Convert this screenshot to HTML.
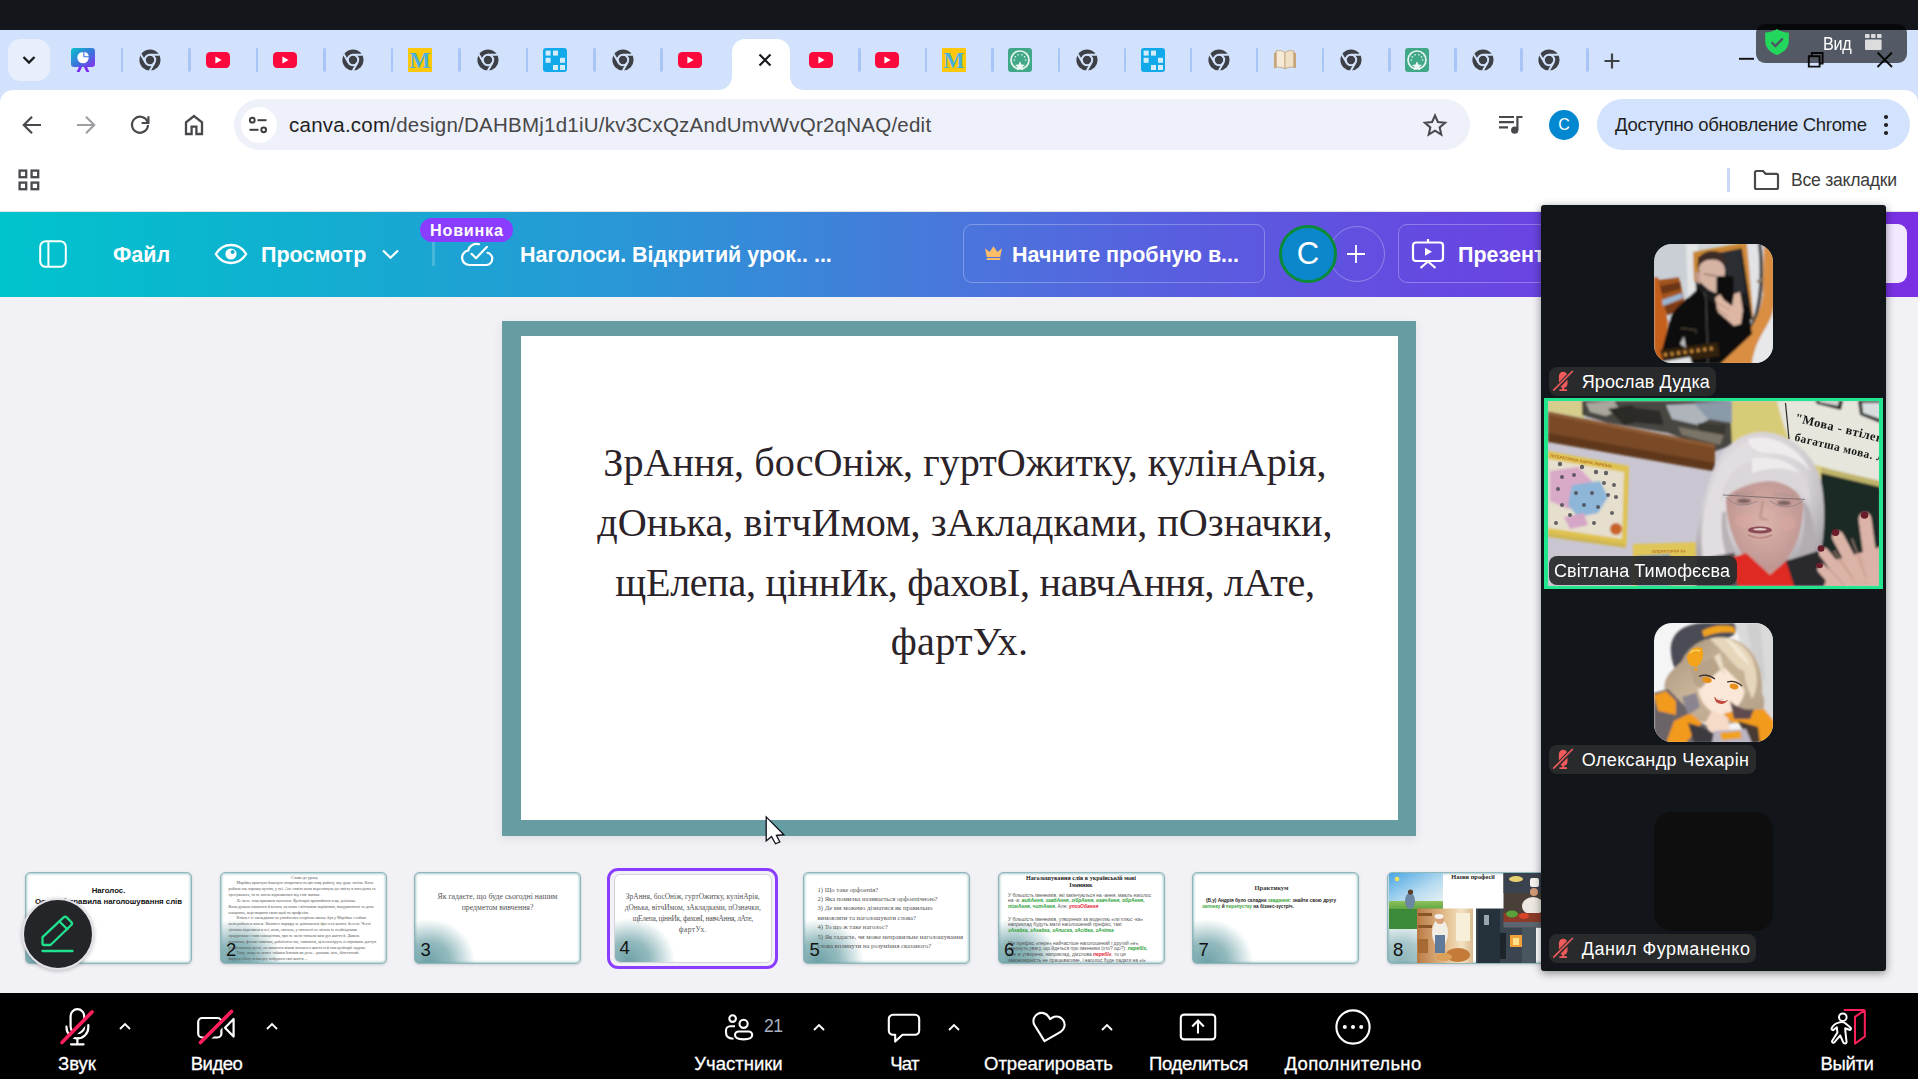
<!DOCTYPE html>
<html lang="ru">
<head>
<meta charset="utf-8">
<title>Zoom - Canva</title>
<style>
*{box-sizing:border-box;margin:0;padding:0}
html,body{width:1918px;height:1079px;overflow:hidden;background:#f2f1f5;font-family:"Liberation Sans","DejaVu Sans",sans-serif;}
#root{position:relative;width:1918px;height:1079px;overflow:hidden}
.abs{position:absolute}
/* top black bar */
#topbar{left:0;top:0;width:1918px;height:30px;background:#13161a}
/* chrome tab strip */
#tabstrip{left:0;top:30px;width:1918px;height:76px;background:#d3e2fc}
#tabdrop{left:8px;top:39px;width:42px;height:42px;border-radius:13px;background:#e8eefc}
.sep{position:absolute;top:48px;width:2.800px;height:24px;background:#a9c5f7;border-radius:1.400px}
.fav{position:absolute;top:48px;width:24px;height:24px}
#acttab{left:732px;top:39px;width:58px;height:51px;background:#fff;border-radius:13px 13px 0 0}
#acttab:before,#acttab:after{content:"";position:absolute;bottom:0;width:13px;height:13px}
#acttab:before{left:-13px;background:radial-gradient(circle at 0 0,transparent 12.5px,#fff 13px)}
#acttab:after{right:-13px;background:radial-gradient(circle at 100% 0,transparent 12.5px,#fff 13px)}
/* toolbar */
#toolbar{left:0;top:90px;width:1918px;height:67px;background:#fff;border-radius:13px 13px 0 0}
#omni{left:234px;top:99px;width:1236px;height:51px;border-radius:26px;background:#eef0fa}
#omni .site{position:absolute;left:6.500px;top:7.500px;width:36px;height:36px;border-radius:50%;background:#fff}
#url{left:289px;top:99px;height:51px;line-height:51px;font-size:20.5px;color:#1f1f1f;letter-spacing:0.24px;white-space:nowrap}
#url span{color:#474747}
#upd{left:1597px;top:99px;width:313px;height:51px;border-radius:26px;background:#d3e3fd}
#updt{left:1615px;top:99px;height:51px;line-height:51px;font-size:18.5px;color:#1f1f1f;white-space:nowrap;letter-spacing:-.3px}
#prof{left:1549px;top:110px;width:30px;height:30px;border-radius:50%;background:#0288d1;color:#fff;font-size:16px;text-align:center;line-height:30px}
/* bookmarks */
#bookmarks{left:0;top:157px;width:1918px;height:55px;background:#fff}
#allbm{left:1791px;top:166px;height:28px;line-height:28px;font-size:17.600px;color:#3c3c3c;white-space:nowrap;letter-spacing:-.25px}
/* canva header */
#chead{left:0;top:212px;width:1918px;height:85px;background:linear-gradient(90deg,#00c4cc 0%,#10b0d0 15%,#2a96d6 33%,#4a76dc 50%,#595ddf 62%,#6649e1 75%,#7a30e4 100%)}
.ct{position:absolute;color:#fff;font-weight:bold;font-size:21.5px;line-height:30px;top:239.700px;white-space:nowrap}
#stage{left:0;top:297px;width:1918px;height:696px;background:#f2f1f5}
/* slide */
#slide{left:501.800px;top:320.800px;width:914px;height:514.900px;background:#659da3;box-shadow:0 3px 9px rgba(60,60,90,.10)}
#slidein{left:520.600px;top:335.600px;width:877.800px;height:484.200px;background:#fff}
#stext{left:521px;top:433.100px;width:877px;text-align:center;font-family:"Liberation Serif","DejaVu Serif",serif;font-size:40.200px;line-height:59.700px;color:#2b2328;white-space:nowrap}
.sl{position:relative;left:5.500px}
/* thumbs */
.th{position:absolute;top:872px;width:167px;height:92px;background:#fff;border-radius:5px;border:1px solid #8fb8bd;overflow:hidden;box-shadow:0 1px 3px rgba(0,0,0,.14),inset 0 0 2.500px .500px rgba(95,154,160,.75)}
.th .blob{position:absolute;left:-32px;bottom:-40px;width:92px;height:84px;border-radius:50%;background:radial-gradient(closest-side,#6fa3a8 0%,rgba(111,163,168,.75) 45%,rgba(111,163,168,0) 100%)}
.th .n{position:absolute;left:5.500px;bottom:2.500px;font-size:18.500px;color:#111;line-height:22px}
.tt{position:absolute;left:0;width:100%;text-align:center;font-family:"Liberation Serif",serif;color:#333;white-space:nowrap}
.t2{position:absolute;left:8px;top:1.500px;width:160px;font-family:"Liberation Serif",serif;font-size:4px;line-height:5.850px;color:#555;white-space:nowrap}
.t6{position:absolute;left:9.500px;font-family:"Liberation Sans",sans-serif;font-size:4.850px;line-height:5.900px;color:#555;white-space:nowrap}
.t6 i{color:#2fa33a;font-weight:bold}.t6 b{color:#e6263a;font-style:italic}
.t7{position:absolute;left:9px;top:24.500px;font-family:"Liberation Sans",sans-serif;font-weight:bold;font-size:4.700px;line-height:6.400px;color:#222;white-space:nowrap}
.t7 i{color:#3aa53a;font-style:normal}
.mm{position:absolute;left:3.200px;top:2.800px}
/* zoom bottom */
#zbar{left:0;top:993px;width:1918px;height:86px;background:#000}
.zl{position:absolute;top:1050.600px;height:26px;line-height:26px;color:#fff;font-size:18.5px;text-align:center;white-space:nowrap;transform:translateX(-50%);-webkit-text-stroke:.300px #fff}
/* zoom panel */
#zpanel{left:1541px;top:205px;width:345px;height:766px;background:#121519;border-radius:3px;box-shadow:0 2px 8px rgba(0,0,0,.45)}
.nm{position:absolute;height:29px;line-height:31px;border-radius:8px;background:rgba(42,44,45,.94);color:#fff;font-size:18px;white-space:nowrap;padding:0 6px 0 32.700px}
.av{position:absolute;left:1654px;width:119px;height:119px;border-radius:18px;overflow:hidden}
</style>
</head>
<body>
<div id="root">
<div id="stage" class="abs"></div>
<div id="topbar" class="abs"></div>
<div id="tabstrip" class="abs"></div>
<div id="tabdrop" class="abs"></div>
<div id="acttab" class="abs"></div>
<div class="sep" style="left:120.65px"></div>
<div class="sep" style="left:188.15px"></div>
<div class="sep" style="left:255.65px"></div>
<div class="sep" style="left:323.15px"></div>
<div class="sep" style="left:390.65px"></div>
<div class="sep" style="left:458.15px"></div>
<div class="sep" style="left:525.65px"></div>
<div class="sep" style="left:593.15px"></div>
<div class="sep" style="left:660.15px"></div>
<div class="sep" style="left:858.15px"></div>
<div class="sep" style="left:924.65px"></div>
<div class="sep" style="left:991.15px"></div>
<div class="sep" style="left:1057.65px"></div>
<div class="sep" style="left:1123.65px"></div>
<div class="sep" style="left:1189.65px"></div>
<div class="sep" style="left:1255.65px"></div>
<div class="sep" style="left:1321.65px"></div>
<div class="sep" style="left:1388.15px"></div>
<div class="sep" style="left:1454.15px"></div>
<div class="sep" style="left:1520.15px"></div>
<div class="sep" style="left:1586.15px"></div>
<svg class="fav" style="left:71px" viewBox="0 0 24 24"><defs><linearGradient id="cvg" x1="0" y1="0" x2="1" y2="1"><stop offset="0" stop-color="#06c5c9"/><stop offset=".55" stop-color="#3c72dc"/><stop offset="1" stop-color="#8b2ff0"/></linearGradient></defs><rect x="0" y="0" width="24" height="19" rx="3.2" fill="url(#cvg)"/><path d="M8.4 18L5.6 24H8.6L11 19ZM15.6 18L18.4 24H15.4L13 19Z" fill="#7a2df0"/><circle cx="12" cy="9.6" r="5.7" fill="#fff"/><path d="M12.9 3.2A5.7 5.7 0 0 1 18.4 8.7H12.9Z" fill="#fff" stroke="#3a78dd" stroke-width="1.1"/></svg>
<svg class="fav" style="left:138px" viewBox="0 0 24 24"><circle cx="12" cy="12" r="10.6" fill="#3d4046"/><g stroke="#d3e2fc" stroke-width="2" fill="none" stroke-linecap="butt"><circle cx="12" cy="12" r="5.2"/><path d="M12 6.8H21.6M7.5 14.6L2.7 6.3M16.5 14.6L11.7 22.9"/></g><circle cx="12" cy="12" r="3.4" fill="#3d4046"/></svg>
<svg class="fav" style="left:205.5px" viewBox="0 0 24 24"><rect x="0" y="4" width="24" height="16" rx="4.2" fill="#fa0a3c"/><path d="M9.4 8.6L15.6 12L9.4 15.4Z" fill="#fff"/></svg>
<svg class="fav" style="left:272.5px" viewBox="0 0 24 24"><rect x="0" y="4" width="24" height="16" rx="4.2" fill="#fa0a3c"/><path d="M9.4 8.6L15.6 12L9.4 15.4Z" fill="#fff"/></svg>
<svg class="fav" style="left:340.5px" viewBox="0 0 24 24"><circle cx="12" cy="12" r="10.6" fill="#3d4046"/><g stroke="#d3e2fc" stroke-width="2" fill="none" stroke-linecap="butt"><circle cx="12" cy="12" r="5.2"/><path d="M12 6.8H21.6M7.5 14.6L2.7 6.3M16.5 14.6L11.7 22.9"/></g><circle cx="12" cy="12" r="3.4" fill="#3d4046"/></svg>
<svg class="fav" style="left:407.5px" viewBox="0 0 24 24"><rect x="0" y="0" width="24" height="24" fill="#fdc80a"/><text x="12" y="20" text-anchor="middle" font-family="Liberation Serif,serif" font-weight="bold" font-size="23" fill="#4cb0dc" textLength="21" lengthAdjust="spacingAndGlyphs">M</text></svg>
<svg class="fav" style="left:476px" viewBox="0 0 24 24"><circle cx="12" cy="12" r="10.6" fill="#3d4046"/><g stroke="#d3e2fc" stroke-width="2" fill="none" stroke-linecap="butt"><circle cx="12" cy="12" r="5.2"/><path d="M12 6.8H21.6M7.5 14.6L2.7 6.3M16.5 14.6L11.7 22.9"/></g><circle cx="12" cy="12" r="3.4" fill="#3d4046"/></svg>
<svg class="fav" style="left:543px" viewBox="0 0 24 24"><rect width="24" height="24" rx="3" fill="#12a9ea"/><g fill="#d5ecfb"><rect x="2.6" y="2.6" width="5" height="5"/><rect x="10" y="2.6" width="5" height="5"/><rect x="2.6" y="9.8" width="5" height="5"/><rect x="17" y="9.8" width="5" height="5"/><rect x="10" y="17" width="5" height="5"/><rect x="17" y="17" width="5" height="5"/></g></svg>
<svg class="fav" style="left:610.5px" viewBox="0 0 24 24"><circle cx="12" cy="12" r="10.6" fill="#3d4046"/><g stroke="#d3e2fc" stroke-width="2" fill="none" stroke-linecap="butt"><circle cx="12" cy="12" r="5.2"/><path d="M12 6.8H21.6M7.5 14.6L2.7 6.3M16.5 14.6L11.7 22.9"/></g><circle cx="12" cy="12" r="3.4" fill="#3d4046"/></svg>
<svg class="fav" style="left:677.5px" viewBox="0 0 24 24"><rect x="0" y="4" width="24" height="16" rx="4.2" fill="#fa0a3c"/><path d="M9.4 8.6L15.6 12L9.4 15.4Z" fill="#fff"/></svg>
<svg class="fav" style="left:808.5px" viewBox="0 0 24 24"><rect x="0" y="4" width="24" height="16" rx="4.2" fill="#fa0a3c"/><path d="M9.4 8.6L15.6 12L9.4 15.4Z" fill="#fff"/></svg>
<svg class="fav" style="left:875px" viewBox="0 0 24 24"><rect x="0" y="4" width="24" height="16" rx="4.2" fill="#fa0a3c"/><path d="M9.4 8.6L15.6 12L9.4 15.4Z" fill="#fff"/></svg>
<svg class="fav" style="left:941.5px" viewBox="0 0 24 24"><rect x="0" y="0" width="24" height="24" fill="#fdc80a"/><text x="12" y="20" text-anchor="middle" font-family="Liberation Serif,serif" font-weight="bold" font-size="23" fill="#4cb0dc" textLength="21" lengthAdjust="spacingAndGlyphs">M</text></svg>
<svg class="fav" style="left:1008px" viewBox="0 0 24 24"><rect width="24" height="24" rx="3" fill="#40a888"/><circle cx="12" cy="12" r="9" fill="none" stroke="#e9f5f0" stroke-width="1.700"/><g fill="#d6eee4"><circle cx="6.400" cy="12.000" r=".850"/><circle cx="7.413" cy="8.788" r=".850"/><circle cx="10.085" cy="6.738" r=".850"/><circle cx="13.915" cy="6.738" r=".850"/><circle cx="16.587" cy="8.788" r=".850"/><circle cx="17.600" cy="12.000" r=".850"/></g><path d="M12 13.200L13.400 16.400L17 17L14.400 19L15.200 22.400L12 20.600L8.800 22.400L9.600 19L7 17L10.600 16.400Z" fill="#eef8f4"/></svg>
<svg class="fav" style="left:1074.5px" viewBox="0 0 24 24"><circle cx="12" cy="12" r="10.6" fill="#3d4046"/><g stroke="#d3e2fc" stroke-width="2" fill="none" stroke-linecap="butt"><circle cx="12" cy="12" r="5.2"/><path d="M12 6.8H21.6M7.5 14.6L2.7 6.3M16.5 14.6L11.7 22.9"/></g><circle cx="12" cy="12" r="3.4" fill="#3d4046"/></svg>
<svg class="fav" style="left:1140.5px" viewBox="0 0 24 24"><rect width="24" height="24" rx="3" fill="#12a9ea"/><g fill="#d5ecfb"><rect x="2.6" y="2.6" width="5" height="5"/><rect x="10" y="2.6" width="5" height="5"/><rect x="2.6" y="9.8" width="5" height="5"/><rect x="17" y="9.8" width="5" height="5"/><rect x="10" y="17" width="5" height="5"/><rect x="17" y="17" width="5" height="5"/></g></svg>
<svg class="fav" style="left:1207px" viewBox="0 0 24 24"><circle cx="12" cy="12" r="10.6" fill="#3d4046"/><g stroke="#d3e2fc" stroke-width="2" fill="none" stroke-linecap="butt"><circle cx="12" cy="12" r="5.2"/><path d="M12 6.8H21.6M7.5 14.6L2.7 6.3M16.5 14.6L11.7 22.9"/></g><circle cx="12" cy="12" r="3.4" fill="#3d4046"/></svg>
<svg class="fav" style="left:1272.5px" viewBox="0 0 24 24"><path d="M1 5.5L4 3.2V19L1 20.6Z" fill="#c9a57a"/><path d="M23 5.5L20 3.2V19L23 20.6Z" fill="#c9a57a"/><path d="M3.2 3C6.5 2 9.6 2.6 12 4.6V21C9.6 19.2 6.5 18.6 3.2 19.4Z" fill="#f6ead6" stroke="#b8966c" stroke-width=".7"/><path d="M20.8 3C17.5 2 14.4 2.6 12 4.6V21C14.4 19.2 17.5 18.6 20.8 19.4Z" fill="#efe0c6" stroke="#b8966c" stroke-width=".7"/></svg>
<svg class="fav" style="left:1339px" viewBox="0 0 24 24"><circle cx="12" cy="12" r="10.6" fill="#3d4046"/><g stroke="#d3e2fc" stroke-width="2" fill="none" stroke-linecap="butt"><circle cx="12" cy="12" r="5.2"/><path d="M12 6.8H21.6M7.5 14.6L2.7 6.3M16.5 14.6L11.7 22.9"/></g><circle cx="12" cy="12" r="3.4" fill="#3d4046"/></svg>
<svg class="fav" style="left:1404.5px" viewBox="0 0 24 24"><rect width="24" height="24" rx="3" fill="#40a888"/><circle cx="12" cy="12" r="9" fill="none" stroke="#e9f5f0" stroke-width="1.700"/><g fill="#d6eee4"><circle cx="6.400" cy="12.000" r=".850"/><circle cx="7.413" cy="8.788" r=".850"/><circle cx="10.085" cy="6.738" r=".850"/><circle cx="13.915" cy="6.738" r=".850"/><circle cx="16.587" cy="8.788" r=".850"/><circle cx="17.600" cy="12.000" r=".850"/></g><path d="M12 13.200L13.400 16.400L17 17L14.400 19L15.200 22.400L12 20.600L8.800 22.400L9.600 19L7 17L10.600 16.400Z" fill="#eef8f4"/></svg>
<svg class="fav" style="left:1471px" viewBox="0 0 24 24"><circle cx="12" cy="12" r="10.6" fill="#3d4046"/><g stroke="#d3e2fc" stroke-width="2" fill="none" stroke-linecap="butt"><circle cx="12" cy="12" r="5.2"/><path d="M12 6.8H21.6M7.5 14.6L2.7 6.3M16.5 14.6L11.7 22.9"/></g><circle cx="12" cy="12" r="3.4" fill="#3d4046"/></svg>
<svg class="fav" style="left:1537px" viewBox="0 0 24 24"><circle cx="12" cy="12" r="10.6" fill="#3d4046"/><g stroke="#d3e2fc" stroke-width="2" fill="none" stroke-linecap="butt"><circle cx="12" cy="12" r="5.2"/><path d="M12 6.8H21.6M7.5 14.6L2.7 6.3M16.5 14.6L11.7 22.9"/></g><circle cx="12" cy="12" r="3.4" fill="#3d4046"/></svg>
<div id="toolbar" class="abs"></div>
<div id="omni" class="abs"><div class="site"></div></div>
<div id="url" class="abs">canva.com<span>/design/DAHBMj1d1iU/kv3CxQzAndUmvWvQr2qNAQ/edit</span></div>
<div id="prof" class="abs">C</div>
<div id="upd" class="abs"></div>
<div id="updt" class="abs">Доступно обновление Chrome</div>
<div id="bookmarks" class="abs"></div>
<div id="allbm" class="abs">Все закладки</div>
<!-- tab dropdown chevron -->
<svg class="abs" style="left:20px;top:52px" width="18" height="16" viewBox="0 0 18 16"><path d="M3.5 5L9 10.5L14.5 5" fill="none" stroke="#1b1b1f" stroke-width="2.3"/></svg>
<!-- active tab close -->
<svg class="abs" style="left:757px;top:52px" width="16" height="16" viewBox="0 0 16 16"><path d="M2.5 2.5L13.5 13.5M13.5 2.5L2.5 13.5" stroke="#1b1b1f" stroke-width="2.2" fill="none"/></svg>
<!-- new tab plus -->
<svg class="abs" style="left:1603px;top:52px" width="18" height="18" viewBox="0 0 18 18"><path d="M9 1.5V16.5M1.5 9H16.5" stroke="#3f4247" stroke-width="2.2" fill="none"/></svg>
<!-- window controls -->
<svg class="abs" style="left:1736px;top:48px" width="160" height="24" viewBox="0 0 160 24"><g stroke="#111" stroke-width="1.900" fill="none"><path d="M3 10.8H18"/><path d="M72.8 8.2H83.6V18.6H72.8Z"/><path d="M75.8 8.2V5H86.6V15.6H83.6"/><path d="M141.5 4.5L156 19M156 4.5L141.5 19"/></g></svg>
<!-- zoom overlay pill -->
<div class="abs" style="left:1756px;top:24px;width:151px;height:39px;border-radius:9px;background:rgba(0,0,0,.6)"></div>
<svg class="abs" style="left:1764px;top:28px" width="26" height="28" viewBox="0 0 26 28"><path d="M13 1C9.8 3.4 6 4.4 1.2 4.6V13c0 7 5 11.4 11.8 14 6.800-2.6 11.800-7 11.800-14V4.600C20 4.400 16.200 3.400 13 1Z" fill="#23d65c"/><path d="M7.600 14.200L11.400 18L18.800 10.400" fill="none" stroke="#4d5560" stroke-width="2.300"/></svg>
<div class="abs" style="left:1823px;top:31px;height:26px;line-height:26px;font-size:18px;color:#fff;letter-spacing:-.3px;transform:scaleX(.9);transform-origin:0 50%">Вид</div>
<svg class="abs" style="left:1865px;top:34px" width="17" height="16" viewBox="0 0 17 16"><g fill="#dcdcdc"><rect x="0" y="0" width="4.600" height="4" rx=".8"/><rect x="6" y="0" width="4.600" height="4" rx=".8"/><rect x="12" y="0" width="4.600" height="4" rx=".8"/><rect x="0" y="5.500" width="16.600" height="10.500" rx="1"/></g></svg>
<!-- toolbar icons -->
<svg class="abs" style="left:20px;top:113px" width="24" height="24" viewBox="0 0 24 24"><path d="M21 12H4.500M12 3.800L3.800 12L12 20.200" fill="none" stroke="#47494d" stroke-width="2.200"/></svg>
<svg class="abs" style="left:74px;top:113px" width="24" height="24" viewBox="0 0 24 24"><path d="M3 12H19.500M12 3.800L20.200 12L12 20.200" fill="none" stroke="#9d9fa3" stroke-width="2.200"/></svg>
<svg class="abs" style="left:128px;top:113px" width="24" height="24" viewBox="0 0 24 24"><path d="M19.600 9.200A8 8 0 1 0 20 12" fill="none" stroke="#47494d" stroke-width="2.200"/><path d="M20.400 3.200V10H13.600" fill="none" stroke="#47494d" stroke-width="2.200"/></svg>
<svg class="abs" style="left:182px;top:112px" width="24" height="24" viewBox="0 0 24 24"><path d="M4 22V10.400L12 4L20 10.400V22H14.400V14.600H9.600V22Z" fill="none" stroke="#47494d" stroke-width="2.300" stroke-linejoin="miter"/></svg>
<svg class="abs" style="left:248px;top:115px" width="20" height="20" viewBox="0 0 20 20"><g fill="none" stroke="#3c3e42" stroke-width="2"><circle cx="4.300" cy="5.200" r="2.400"/><path d="M9.500 5.200H18.500"/><circle cx="15.700" cy="14.800" r="2.400"/><path d="M1.500 14.800H10.500"/></g></svg>
<svg class="abs" style="left:1422px;top:112px" width="26" height="26" viewBox="0 0 24 24"><path d="M12 3.200L14.700 9.300L21.300 9.900L16.300 14.300L17.800 20.800L12 17.300L6.200 20.800L7.700 14.300L2.700 9.900L9.300 9.300Z" fill="none" stroke="#47494d" stroke-width="1.900" stroke-linejoin="miter"/></svg>
<svg class="abs" style="left:1498px;top:114px" width="26" height="22" viewBox="0 0 26 22"><g stroke="#47494d" stroke-width="2.200" fill="none"><path d="M1 3H16M1 8.200H16M1 13.400H10"/><path d="M19.400 16V3H24.500"/></g><circle cx="16.700" cy="16.200" r="3.600" fill="#47494d"/></svg>
<svg class="abs" style="left:1882px;top:113px" width="8" height="24" viewBox="0 0 8 24"><g fill="#1f1f1f"><circle cx="4" cy="4" r="2.100"/><circle cx="4" cy="12" r="2.100"/><circle cx="4" cy="20" r="2.100"/></g></svg>
<!-- bookmarks bar -->
<svg class="abs" style="left:18px;top:169px" width="23" height="23" viewBox="0 0 23 23"><g fill="none" stroke="#47494d" stroke-width="2.300"><rect x="1.600" y="1.600" width="6.600" height="6.600"/><rect x="13.600" y="1.600" width="6.600" height="6.600"/><rect x="1.600" y="13.600" width="6.600" height="6.600"/><rect x="13.600" y="13.600" width="6.600" height="6.600"/></g></svg>
<div class="abs" style="left:1727px;top:168px;width:2.500px;height:24px;background:#c9d8f6;border-radius:1px"></div>
<svg class="abs" style="left:1753px;top:169px" width="27" height="22" viewBox="0 0 27 22"><path d="M2 3.500Q2 2 3.500 2H10L12.600 4.800H23.500Q25 4.800 25 6.300V18.500Q25 20 23.500 20H3.500Q2 20 2 18.500Z" fill="none" stroke="#47494d" stroke-width="2.200"/></svg>

<div class="abs" style="left:0;top:210.500px;width:1918px;height:1.500px;background:#e2e2e6"></div>
<div id="chead" class="abs"></div>
<!-- canva header icons -->
<svg class="abs" style="left:38px;top:239px" width="30" height="30" viewBox="0 0 30 30"><rect x="2.200" y="2.200" width="25.600" height="25.600" rx="5.500" fill="none" stroke="#fff" stroke-width="2"/><path d="M10.400 2.500V27.500" stroke="#fff" stroke-width="2"/></svg>
<svg class="abs" style="left:214px;top:241px" width="34" height="26" viewBox="0 0 34 26"><path d="M1.800 13C5.500 7 10.800 4 17 4S28.500 7 32.200 13C28.500 19 23.200 22 17 22S5.500 19 1.800 13Z" fill="none" stroke="#fff" stroke-width="2.300"/><circle cx="17" cy="13" r="5.600" fill="#fff"/><circle cx="18.600" cy="11" r="2" fill="#18a6d2"/></svg>
<svg class="abs" style="left:381px;top:247px" width="19" height="14" viewBox="0 0 19 14"><path d="M2 3.500L9.500 10.800L17 3.500" fill="none" stroke="#fff" stroke-width="2.200"/></svg>
<div class="abs" style="left:432px;top:242px;width:2.600px;height:24px;background:rgba(255,255,255,.2)"></div>
<div class="abs" style="left:420px;top:218px;width:93px;height:24px;border-radius:12px;background:#8b3dff;color:#fff;font-weight:bold;font-size:16.200px;line-height:24.500px;text-align:center;letter-spacing:.75px;text-indent:.75px">Новинка</div>
<svg class="abs" style="left:460px;top:240px" width="36" height="28" viewBox="0 0 36 28"><path d="M27.500 12.800A6.200 6.200 0 0 1 26.500 25H9.500A7.300 7.300 0 0 1 8.200 10.500A8.600 8.600 0 0 1 19 4.200" fill="none" stroke="#fff" stroke-width="2.200" stroke-linecap="round"/><path d="M11.500 13.800L16 18.200L27 6.800" fill="none" stroke="#fff" stroke-width="2.200" stroke-linecap="round" stroke-linejoin="round"/></svg>
<!-- trial button -->
<div class="abs" style="left:963px;top:224px;width:302px;height:59px;border-radius:9px;border:1px solid rgba(255,255,255,.28)"></div>
<svg class="abs" style="left:984px;top:245px" width="19" height="16" viewBox="0 0 19 16"><path d="M1 3.200L5.600 7L9.500 1.200L13.400 7L18 3.200L16.200 12H2.800Z" fill="#fdbc68"/><rect x="2.800" y="13" width="13.400" height="2" rx=".6" fill="#fdbc68"/></svg>
<!-- avatar -->
<div class="abs" style="left:1279px;top:225px;width:58px;height:58px;border-radius:50%;background:#0d87cb;border:3px solid #0c8a3c;color:#fff;font-size:31px;line-height:52px;text-align:center;z-index:2">C</div>
<div class="abs" style="left:1329px;top:226px;width:56px;height:56px;border-radius:50%;border:1px solid rgba(255,255,255,.3)"></div>
<svg class="abs" style="left:1346px;top:244px;z-index:3" width="20" height="20" viewBox="0 0 20 20"><path d="M10 1V19M1 10H19" stroke="#fff" stroke-width="1.800"/></svg>
<!-- present button -->
<div class="abs" style="left:1398px;top:224px;width:200px;height:59px;border-radius:9px;border:1px solid rgba(255,255,255,.28)"></div>
<svg class="abs" style="left:1411px;top:238px" width="34" height="32" viewBox="0 0 34 32"><g fill="none" stroke="#fff" stroke-width="2.200" stroke-linejoin="round"><path d="M17 1V4.500"/><rect x="2" y="4.500" width="30" height="18.500" rx="3"/><path d="M9.500 30L17 23.500L24.500 30"/></g><path d="M14 9.800L21 13.800L14 17.800Z" fill="#fff"/></svg>
<!-- share button peeking right of panel -->
<div class="abs" style="left:1850px;top:224px;width:57px;height:59px;border-radius:9px;background:#f2e8ff"></div>

<div class="ct" style="left:113px">Файл</div>
<div class="ct" style="left:261px">Просмотр</div>
<div class="ct" style="left:520px">Наголоси. Відкритий урок.. ...</div>
<div class="ct" style="left:1012px">Начните пробную в...</div>
<div class="ct" style="left:1458px">Презент</div>
<div id="slide" class="abs"></div>
<div id="slidein" class="abs"></div>
<div id="stext" class="abs"><span class="sl">ЗрАння, босОніж, гуртОжитку, кулінАрія,</span><br><span class="sl">дОнька, вітчИмом, зАкладками, пОзначки,</span><br><span class="sl" style="letter-spacing:-.33px">щЕлепа, ціннИк, фаховІ, навчАння, лАте,</span><br><span style="letter-spacing:.3px">фартУх.</span></div>
<!-- thumbnails -->
<div class="th" style="left:25px"><div class="blob"></div>
<div class="tt" style="top:12px;font-family:'Liberation Sans',sans-serif;font-weight:bold;font-size:7.800px;line-height:11px;color:#111">Наголос.<br>Основні правила наголошування слів</div></div>
<div class="th" style="left:219.500px"><div class="blob"></div>
<div class="t2"><div style="text-align:center;width:152px">Слово до уроку</div>&nbsp;&nbsp;&nbsp;&nbsp;&nbsp;&nbsp;&nbsp;&nbsp;Марійка прагнула блискуче впоратися на цю нову роботу, яку дуже хотіла. Вона<br>робила так хорошу кухню, у неї. Але навіть коли переглянула до змісту в понеділка та<br>тренувалась, то не могла відмовитися від слів звички.<br>&nbsp;&nbsp;&nbsp;&nbsp;&nbsp;&nbsp;&nbsp;&nbsp;Ле мене знав призвати наголоси. Кулінарія прямобачно в ще декілька.<br>Коли думала написати й казати, як мама з вітчимом порівнюю, покуриночної та дочь<br>клацають, перетворити свою щоб на професію.<br>&nbsp;&nbsp;&nbsp;&nbsp;&nbsp;&nbsp;&nbsp;&nbsp;Втікнет із закладками на улюблених сторінок аванье був у Марійки з собою<br>коли робила в колеж. Вплинет маршру ає допомагала йро геса шлюзе безело. Чесні<br>цінника відмовила в неї, коли, сказала, у натхнені не кінала їх необхідними<br>продуктами з ним самоцінник, про не меня тоткали ким дух життя й. Давала<br>позначки, фахові навички, добліснісь час, навчання, цілеспосіруть эі отримаює доступ<br>у гуртожитку кухні, на жимсона вікові атильги а життя гей сим кулінарії задума.<br>&nbsp;&nbsp;&nbsp;&nbsp;&nbsp;&nbsp;&nbsp;&nbsp;Тому, якщо не ините тайким Іспомів ви день – ранкове лате, бінстатний<br>фартух і білу та вперту побудити свої життя ...</div><div class="n">2</div></div>
<div class="th" style="left:414px"><div class="blob"></div>
<div class="tt" style="top:19.300px;font-size:7.800px;line-height:10.800px;color:#555">Як гадаєте, що буде сьогодні нашим<br>предметом вивчення?</div><div class="n">3</div></div>
<div class="abs" style="left:607px;top:867.500px;width:171px;height:101px;border:3.200px solid #8b3dff;border-radius:11px"></div>
<div class="th" style="left:613.500px;top:873.500px;width:158.500px;height:89px;border-color:#d4d2da;box-shadow:none;border-radius:6px"><div class="blob"></div>
<div class="tt" style="top:17.600px;font-size:7.450px;line-height:10.900px;color:#555">ЗрАння, босОніж, гуртОжитку, кулінАрія,<br>дОнька, вітчИмом, зАкладками, пОзначки,<br><span style="letter-spacing:-.3px">щЕлепа, ціннИк, фаховІ, навчАння, лАте,</span><br><span style="letter-spacing:.45px">фартУх.</div><div class="n" style="left:5px;bottom:3px">4</div></div>
<div class="th" style="left:803px"><div class="blob"></div>
<div class="tt" style="top:11.500px;left:13.500px;text-align:left;font-size:6.600px;line-height:9.450px;color:#555">1) Що таке орфоепія?<br>2) Яка помилка називається орфоепічною?<br>3) Де ми можемо дізнатися як правильно<br>вимовляти та наголошувати слова?<br>4) То що ж таке наголос?<br>5) Як гадаєте, чи може неправильне наголошування<br>слова вплинути на розуміння сказаного?</div><div class="n">5</div></div>
<div class="th" style="left:997.500px"><div class="blob"></div>
<div class="tt" style="top:1.500px;font-weight:bold;font-size:6.100px;line-height:7.600px;color:#222">Наголошування слів в українській мові<br>Іменник</div>
<div class="t6" style="top:19.500px">У більшість іменників, які закінчуються на -ання, мають наголос<br>на -а: <i>видАння, завдАння, зібрАння, навчАння, обрАння,<br>пізнАння, читАння.</i> Але: <b>упозОбання</b></div>
<div class="t6" style="top:43.500px">У більшість іменників, утворених за моделлю «ли плюс -ка»<br>наприклад будуть мати наголошений префікс, такі:<br><i>зАгадка, зАгадка, зАписка, зАсідка, зАчіпка</i></div>
<div class="t6" style="top:67.500px">Ще префікс «пере» найчастіше наголошений і другий «е»,<br>звернуть увагу, що йдеться про іменники (хто? що?): <i>перебІг,</i><br>але ж утворена, наприклад, дієслова <b>перебІг</b>, то ця<br>закономірність не працюватиме, і наголос буде падати на «і»</div><div class="n">6</div></div>
<div class="th" style="left:1192px"><div class="blob"></div>
<div class="tt" style="top:9.500px;font-weight:bold;font-size:6.500px;line-height:9px;color:#333;left:-4px">Практикум</div>
<div class="t7">&nbsp;&nbsp;&nbsp;(В,у) Андрія було складне <i>завдання:</i> знайти свою другу<br><i>запонку</i> й <i>перепустку</i> на бізнес-зустріч.</div><div class="n">7</div></div>
<div class="th" style="left:1386.500px;border-radius:5px 0 0 5px"><div class="blob" style="opacity:.8"></div>
<svg class="abs" style="left:0;top:0" width="167" height="92" viewBox="0 0 167 92"><defs><linearGradient id="sky" x1="0" y1="0" x2="1" y2="1"><stop offset="0" stop-color="#4aa6e4"/><stop offset=".6" stop-color="#b8dcf0"/><stop offset="1" stop-color="#e8f2f2"/></linearGradient><linearGradient id="fld" x1="0" y1="0" x2="0" y2="1"><stop offset="0" stop-color="#8fc25a"/><stop offset=".4" stop-color="#4c9a3a"/><stop offset="1" stop-color="#2f7a36"/></linearGradient><linearGradient id="bak" x1="0" y1="0" x2="1" y2="0"><stop offset="0" stop-color="#b97a45"/><stop offset=".5" stop-color="#e3bb8a"/><stop offset=".8" stop-color="#f3e3c4"/><stop offset="1" stop-color="#d9b98e"/></linearGradient><filter id="b1"><feGaussianBlur stdDeviation=".7"/></filter></defs>
<rect x="1" y="0" width="54" height="30" fill="url(#sky)"/><circle cx="9" cy="6" r="2.200" fill="#f6e45a"/><rect x="1" y="28" width="54" height="28" fill="url(#fld)"/><rect x="1" y="36" width="28" height="20" fill="#3a8a3a"/>
<g filter="url(#b1)"><ellipse cx="22" cy="28" rx="5" ry="8" fill="#6c87a3"/><circle cx="22.500" cy="19" r="2.600" fill="#5a3d2a"/></g>
<rect x="29" y="35.500" width="56" height="57" fill="url(#bak)"/>
<g filter="url(#b1)"><rect x="30" y="40" width="14" height="3" fill="#8a5528"/><rect x="30" y="52" width="14" height="3" fill="#8a5528"/><rect x="30" y="66" width="10" height="14" fill="#a86a35"/><rect x="68" y="40" width="14" height="28" fill="#f7efd8"/><ellipse cx="52" cy="60" rx="8" ry="14" fill="#f1ece4"/><rect x="47" y="62" width="10" height="18" fill="#5f7a9a"/><circle cx="52" cy="47" r="4" fill="#d9a07a"/><ellipse cx="51" cy="43.500" rx="4.500" ry="2.400" fill="#f4f0ea"/><ellipse cx="70" cy="82" rx="12" ry="7" fill="#c47a38"/><ellipse cx="56" cy="84" rx="8" ry="4" fill="#dba05a"/></g>
<rect x="88" y="35.500" width="60" height="57" fill="#3a454f"/>
<g filter="url(#b1)"><rect x="90" y="36" width="22" height="56" fill="#27313a"/><rect x="122" y="62" width="12" height="12" fill="#f2a23a"/><rect x="125" y="65" width="6" height="7" fill="#ffe08a"/><rect x="112" y="60" width="6" height="26" fill="#1e252c"/><rect x="134" y="40" width="14" height="50" fill="#4a5660"/><rect x="96" y="42" width="5" height="10" fill="#9aa7b0"/></g>
<rect x="115.500" y="0" width="52" height="54.500" fill="#4b4038"/>
<g filter="url(#b1)"><rect x="115.500" y="0" width="52" height="20" fill="#3a4250"/><ellipse cx="128" cy="6" rx="7" ry="3" fill="#e8d070"/><rect x="142" y="5" width="9" height="9" rx="2" fill="#f6f3ee"/><circle cx="146" cy="19" r="4" fill="#d39b78"/><ellipse cx="145" cy="33" rx="11" ry="9" fill="#ece7e0"/><rect x="115.500" y="40" width="52" height="9" fill="#8c3a2a"/><ellipse cx="124" cy="41" rx="6" ry="3.500" fill="#5aa03a"/><ellipse cx="136" cy="43" rx="5" ry="3" fill="#d8452a"/><rect x="115.500" y="49" width="52" height="5.500" fill="#5b6670"/></g>
<text x="85" y="6.400" text-anchor="middle" font-family="Liberation Serif,serif" font-weight="bold" font-size="6.400" fill="#222">Назви професії</text></svg>
<div class="n">8</div></div>
<!-- pencil button -->
<div class="abs" style="left:21.500px;top:897.500px;width:72.500px;height:72.500px;border-radius:50%;background:#232529;border:2px solid #e4e3ea;box-shadow:0 1px 4px rgba(0,0,0,.25)"></div>
<svg class="abs" style="left:38px;top:912px" width="40" height="44" viewBox="0 0 40 44"><g fill="none" stroke="#21e28c" stroke-width="2.300" stroke-linejoin="round" stroke-linecap="round"><path d="M4.500 31.500V25.200L25.600 5.300Q27.200 3.900 28.700 5.400L33.300 10Q34.700 11.500 33.300 13L12.500 33H6Q4.500 33 4.500 31.500Z"/><path d="M21.500 9.500L29.300 17.200"/><path d="M4.500 39H34.500"/></g></svg>
<!-- cursor -->
<svg class="abs" style="left:765px;top:815px" width="22" height="32" viewBox="0 0 22 32"><path d="M1.200 1.900V25.900L6.500 21.400L10.500 28.800L14.800 27L11.400 20.400L18.900 19.700Z" fill="#fff" stroke="#0c0c14" stroke-width="1.250" stroke-linejoin="miter"/></svg>

<div id="zpanel" class="abs"></div>
<!-- avatar 1 -->
<div class="av" style="top:244px"><svg width="120" height="120" viewBox="0 0 120 120"><defs><filter id="bl1" x="-10%" y="-10%" width="120%" height="120%"><feGaussianBlur stdDeviation=".900"/></filter></defs>
<rect width="120" height="120" fill="#cdd3d8"/>
<g filter="url(#bl1)">
<path d="M0 0H34V36L20 34L0 34Z" fill="#c9cfd5"/>
<path d="M32 0H44V48L34 56Z" fill="#e4e5e6"/>
<path d="M40 9L88 0L100 76L70 70L42 46Z" fill="#1b1d1f"/>
<path d="M60 6L86 2L92 50L78 48L70 20Z" fill="#2a2d33"/>
<path d="M39 8L88 -1L89 4L44 13L45 36L40 38Z" fill="#c98632"/>
<path d="M87 -1H93L105 76L99 78Z" fill="#d18b3a"/>
<path d="M93 0H111L109 52C106 70 102 78 100 80Z" fill="#e2e3e6"/>
<path d="M104 0H107.500C112 36 108 70 96 90L93 88C104 70 108 36 104 0Z" fill="#47474a"/>
<path d="M103 36L110 34L110 37L103 39Z" fill="#8a7a6a"/>
<path d="M110 0H120V62C118 82 102 90 98 120H64C92 96 106 76 109 50Z" fill="#d98e42"/>
<path d="M120 62C118 82 102 90 98 120H120Z" fill="#e8e8eb"/>
<path d="M0 33L4 33L14 78L9 120H0Z" fill="#c4611a"/>
<path d="M4 36L25 33L31 60L22 66L12 70Z" fill="#a2551f"/>
<path d="M6 42L26 38L27 45L8 50Z" fill="#6a3417"/>
<path d="M8 56L28 49L29 54L9 62Z" fill="#9ab6d2"/>
<path d="M10 62L30 56L31 64L14 72Z" fill="#7a3a18"/>
<path d="M14 72L24 66L26 72L16 80Z" fill="#dfe3e6"/>
<path d="M44 44C38 52 22 62 17 72L8 106L40 120H66L98 90L94 64L86 56L78 50L60 60Z" fill="#0b0b0c"/>
<path d="M44 24C42 12 50 7 59 7C67 7 72 12 72 20L62 15L50 18L46 28Z" fill="#3a2c25"/>
<path d="M45 24C46 18 52 15 60 15.500C66 16 71 20 71 27L70 44L64 50L55 46L46 38Z" fill="#d6b4a4"/>
<path d="M41 27L46 29L46 40L42 38Z" fill="#c39c8c"/>
<path d="M50 30L62 32" stroke="#6a4a40" stroke-width="1" fill="none"/>
<rect x="62.500" y="32" width="17" height="29" rx="2" fill="#08080a"/>
<path d="M61 54L66 50L70 56L78 62L80 50L86 48L89 66L87 80L80 82L64 68Z" fill="#ddb7a4"/>
<path d="M62 58L76 66M62 64L74 72" stroke="#b98e7c" stroke-width="1" fill="none"/>
<path d="M50 48L52 54L54 120" stroke="#4a4a4a" stroke-width="1.300" fill="none"/>
<path d="M26 84L42 86L42 90" stroke="#5a5040" stroke-width="1" fill="none"/>
<path d="M6 106L64 98L66 112L10 120Z" fill="#33200f"/>
<path d="M10 111L62 104" stroke="#c98a3a" stroke-width="3.500" stroke-dasharray="3 3.600" fill="none"/>
<path d="M6 118L36 113L38 120H8Z" fill="#e6e6e8"/>
<path d="M26 100L30 92L32 104Z" fill="#bdbdbd"/>
</g></svg></div>
<div class="nm" style="left:1549px;top:367px;width:166.500px"><svg class="mm" width="22" height="22" viewBox="0 0 22 22"><path d="M11.200 1.800a4.300 4.300 0 0 1 4.300 4.300v7.400a4.300 4.300 0 0 1-3.300 4.200v1.600h2.800v1.700H7.400v-1.700h2.800v-1.600a4.300 4.300 0 0 1-3.300-4.200V6.100A4.300 4.300 0 0 1 11.200 1.800Z" fill="#f25b5b"/><path d="M1.500 21L21.500 .500" stroke="#2a2c2d" stroke-width="4.200"/><path d="M1.200 20.600L20.800 1" stroke="#f25b5b" stroke-width="1.600"/></svg><span style="letter-spacing:.1px">Ярослав Дудка</span></div>
<!-- video tile -->
<div class="abs" style="left:1544px;top:398px;width:338.500px;height:191px;background:#22e68d"></div>
<div class="abs" style="left:1547.500px;top:401px;width:331.500px;height:185px;overflow:hidden"><svg width="332" height="185" viewBox="0 0 332 185"><defs><filter id="bv" x="-5%" y="-5%" width="110%" height="110%"><feGaussianBlur stdDeviation="1.300"/></filter><filter id="bv2" x="-5%" y="-5%" width="110%" height="110%"><feGaussianBlur stdDeviation=".500"/></filter>
<radialGradient id="hair" cx=".45" cy=".35" r=".7"><stop offset="0" stop-color="#e9e6e8"/><stop offset=".6" stop-color="#d4d0d4"/><stop offset="1" stop-color="#a9a4aa"/></radialGradient>
<radialGradient id="face" cx=".5" cy=".45" r=".6"><stop offset="0" stop-color="#dcb4ac"/><stop offset="1" stop-color="#bb928e"/></radialGradient></defs>
<rect width="332" height="185" fill="#c9c6d2"/>
<g filter="url(#bv)">
<path d="M0 0H332V90H180V40L0 8Z" fill="#d8cb78"/>
<path d="M0 0H38L36 17L0 10Z" fill="#d6cd8a"/>
<path d="M34 0H182L184 44L168 50L120 32L60 22L34 14Z" fill="#4a4742"/>
<path d="M38 2L66 0L72 9L58 15L42 11Z" fill="#a9a69c"/>
<path d="M118 4L160 2L170 14L150 24L124 18Z" fill="#aeb4ba"/><path d="M60 8L84 4L96 20L76 24Z" fill="#2c2a27"/><path d="M150 22L178 24L176 38L152 34Z" fill="#3a3832"/>
<path d="M84 6L112 10L116 24L90 22Z" fill="#2e2c2a"/>
<path d="M130 26L176 34L172 44L134 34Z" fill="#7a7468"/><path d="M146 2L184 0L184 22L160 18Z" fill="#8a9aa8"/>
<path d="M0 10.500L167 43.500L167 70L0 40.500Z" fill="#7a4a27"/><path d="M0 10.500L167 43.500L167 47L0 14Z" fill="#8c5c34"/>
<path d="M0 32L167 62L167 70.500L0 41Z" fill="#5e381c"/>
<path d="M0 50L81 65L78.500 144L0 133Z" fill="#dfc24f"/>
<path d="M0 58L76 71L74 138L0 127Z" fill="#e6dfcd"/>
<path d="M2 70L30 66L44 80L40 100L20 108L2 100Z" fill="#d9a9c8"/>
<path d="M24 84L52 80L60 96L50 112L30 116L20 104Z" fill="#8db6d9"/>
<path d="M16 116L36 112L40 124L22 128Z" fill="#d6a6c6"/>
<path d="M62 128A6 6 0 1 0 74 128A6 6 0 1 0 62 128Z" fill="#c8642a"/>
<path d="M0 132L78 143L78 147L0 136Z" fill="#cfb655"/>
<path d="M85 143L152 141L152 185L85 185Z" fill="#e0c558"/>
<path d="M89 155L122 153L122 185L89 185Z" fill="#7e9db3"/>
<path d="M122 158L150 157L150 185H122Z" fill="#b8b8a6"/>
<path d="M229 0H332V82.500L269.500 64.600C250 58 238 40 229 0Z" fill="#e6e6dc"/>
<path d="M267 0H295L293 9L269 3Z" fill="#24231f"/><path d="M271 0H291L290 5L272 1.500Z" fill="#cfd2cf"/>
<path d="M310 0H332V22L312 14Z" fill="#2b2a26"/><path d="M314 2H332V18L315 12Z" fill="#d8dde0"/>
<path d="M273 70L332 84V160L273 158Z" fill="#1f2b25"/>
<path d="M273 66L332 80V86L273 72Z" fill="#bfb46a"/>
<path d="M149 162C145 140 152 104 164 72C174 46 192 32 212 31C240 30 266 52 273 80C278 104 277 136 271 160L262 172L160 172Z" fill="url(#hair)"/>
<path d="M168 74C178 50 198 38 216 38C200 50 186 70 180 96C176 116 176 140 180 160L156 164C150 132 156 100 168 74Z" fill="#e2dde0"/>
<path d="M200 38C222 32 250 44 262 70C252 58 236 52 220 52C210 52 202 48 200 38Z" fill="#f0ecee"/>
<path d="M205 166L234 166L238 184H200Z" fill="#c39a92"/>
<path d="M178 98C178 132 196 168 218 170C240 168 256 136 255 102C250 88 236 80 220 80C200 80 184 88 178 98Z" fill="url(#face)"/>
<path d="M172 100C176 72 200 54 226 56C250 58 264 78 262 102C254 88 240 80 224 80C204 80 186 88 172 100Z" fill="#dbd6d9"/>
<path d="M204 58C220 54 240 58 252 72C238 66 222 66 204 72Z" fill="#eeebed"/>
<path d="M256 100C266 112 270 142 264 164L250 156C256 138 258 118 255 104Z" fill="#b3adb2"/>
<path d="M178 110C178 134 186 156 204 168L186 172C176 156 172 132 174 112Z" fill="#b9b2b6"/>
<ellipse cx="196" cy="100" rx="7" ry="2.600" fill="#5c4a4e" opacity=".75"/><ellipse cx="236" cy="102" rx="7" ry="2.600" fill="#5c4a4e" opacity=".75"/>
<path d="M188 93L206 92M226 93L246 95" stroke="#9a8a8c" stroke-width="1.600" fill="none" opacity=".7"/>
<path d="M215 100L212 117L220 119" stroke="#b08880" stroke-width="2" fill="none" opacity=".8"/>
<ellipse cx="196" cy="120" rx="9" ry="7" fill="#dfa8a2" opacity=".5"/><ellipse cx="240" cy="122" rx="8" ry="7" fill="#dfa8a2" opacity=".45"/>
<path d="M148 158L186 152L200 185H148Z" fill="#4a494c"/>
<path d="M183 157L198 152L222 174L240 158L248 185H190Z" fill="#de2a22"/>
<path d="M238 160L270 150L292 185H246Z" fill="#2a2a2e"/>
<path d="M284 160L332 146V185H276Z" fill="#d9b0a3"/>
<g stroke="#dcb4a7" stroke-linecap="round" fill="none"><path d="M325 178L317 118" stroke-width="13"/><path d="M311 176L290 136" stroke-width="12"/><path d="M299 180L276 152" stroke-width="10.500"/><path d="M292 188L274 168" stroke-width="9.500"/></g>
<g stroke="#c2968a" stroke-linecap="round" fill="none" opacity=".7"><path d="M318 176L304 138" stroke-width="1.500"/><path d="M305 178L286 150" stroke-width="1.500"/><path d="M296 184L280 166" stroke-width="1.300"/></g>
</g>
<g filter="url(#bv2)">
<path d="M175 94L257 98.500" stroke="#6e6264" stroke-width="1.200" fill="none" opacity=".8"/>
<path d="M178 96Q190 110 210 100M222 100Q238 112 255 100" stroke="#8a7e80" stroke-width="1" fill="none" opacity=".7"/>
<ellipse cx="212" cy="129" rx="12" ry="3.600" fill="#8a4a52"/>
<ellipse cx="212" cy="128.300" rx="7" ry="1.300" fill="#e2ccc8"/><path d="M200 134Q212 140 224 134" stroke="#c08a84" stroke-width="1.500" fill="none"/>
<ellipse cx="287.500" cy="131.500" rx="3.800" ry="3.400" fill="#6a1c2c"/><ellipse cx="273" cy="147.500" rx="3.400" ry="3.200" fill="#6a1c2c"/><ellipse cx="316.500" cy="114" rx="3.800" ry="3.800" fill="#6a1c2c"/><ellipse cx="271.500" cy="164.500" rx="3.400" ry="2.800" fill="#6a1c2c"/>
<g fill="#4a4a52" opacity=".85"><circle cx="12" cy="63" r="2.200"/><circle cx="34" cy="66" r="2.200"/><circle cx="48" cy="71" r="2.200"/><circle cx="58" cy="72" r="2.200"/><circle cx="14" cy="76" r="2"/><circle cx="26" cy="74" r="2"/><circle cx="56" cy="82" r="2"/><circle cx="66" cy="84" r="2"/><circle cx="10" cy="88" r="2"/><circle cx="28" cy="92" r="2"/><circle cx="44" cy="92" r="2"/><circle cx="60" cy="94" r="2"/><circle cx="68" cy="96" r="2"/><circle cx="14" cy="104" r="2"/><circle cx="36" cy="104" r="2"/><circle cx="50" cy="106" r="2"/><circle cx="64" cy="112" r="2"/><circle cx="22" cy="114" r="2"/><circle cx="8" cy="122" r="2"/><circle cx="46" cy="122" r="2"/></g>
<text transform="translate(246.500 20.500) rotate(13.500)" font-family="Liberation Serif,serif" font-weight="bold" font-size="12.500" fill="#161616" letter-spacing=".5">"Мова - втілення</text>
<text transform="translate(246 39.500) rotate(13.500)" font-family="Liberation Serif,serif" font-weight="bold" font-size="11.500" fill="#161616" letter-spacing=".5">багатша мова. Ли</text><path d="M237.500 2L241 38" stroke="#2a2a2a" stroke-width="1.200" fill="none"/>
<text transform="translate(2 56) rotate(10)" font-family="Liberation Sans,sans-serif" font-weight="bold" font-size="4.200" fill="#b8782a">ЛІТЕРАТУРНА КАРТА УКРАЇНИ</text>
<text transform="translate(104 152) rotate(-1)" font-family="Liberation Sans,sans-serif" font-weight="bold" font-size="4" fill="#b8782a">ЛІТЕРАТУРНА КА</text>
</g></svg></div>
<div class="nm" style="left:1549px;top:556px;width:188px;padding-left:5px"><span style="letter-spacing:.05px">Світлана Тимофєєва</span></div>
<!-- avatar 3 -->
<div class="av" style="top:622.500px"><svg width="120" height="120" viewBox="0 0 120 120"><defs><filter id="bl3" x="-10%" y="-10%" width="120%" height="120%"><feGaussianBlur stdDeviation=".900"/></filter><linearGradient id="hr3" x1="0" y1="0" x2="1" y2="1"><stop offset="0" stop-color="#a48f7a"/><stop offset=".45" stop-color="#c9b498"/><stop offset="1" stop-color="#b29e86"/></linearGradient></defs>
<rect width="120" height="120" fill="#f5f5f5"/>
<g filter="url(#bl3)">
<path d="M80 0H120V120H96L104 70Z" fill="#dadada"/>
<path d="M92 0H106L112 60L100 40Z" fill="#cfcfcf"/>
<path d="M17 30C15 10 30 0 52 0H80C84 6 82 12 76 14L50 24L36 40L30 56C22 50 18 42 17 30Z" fill="#4b4c55"/>
<path d="M48 8C56 3 70 1 80 4L82 10C72 8 60 10 50 14Z" fill="#f0a21c"/>
<path d="M11 68C8 54 20 46 28 38C36 20 56 10 78 16C100 22 110 46 108 70C114 82 108 96 96 96L72 102L42 98L22 84Z" fill="url(#hr3)"/>
<path d="M56 16C76 10 98 24 102 48C104 60 102 70 98 76L88 50L70 30Z" fill="#e6d6ba"/>
<path d="M70 14C80 18 92 30 96 44L82 30Z" fill="#f3e8d2"/>
<path d="M44 56C48 44 60 40 74 44C88 48 92 60 90 72C86 84 76 92 66 92C54 90 42 76 44 56Z" fill="#fbe7d8"/>
<path d="M36 44L60 34L72 42L58 54L46 66L40 60Z" fill="#b9a388"/>
<path d="M62 36L90 48L94 72L84 58L74 48Z" fill="#c6b195"/>
<path d="M60 34L66 30L72 54L66 46Z" fill="#e9dcc4"/>
<path d="M58 88L74 94L76 110L60 114L50 102Z" fill="#f6dbc9"/>
<path d="M0 70L14 66L30 82L40 96L52 102L62 120H0Z" fill="#6a6468"/>
<path d="M0 72L12 68L22 78L22 92L4 88Z" fill="#f29a1c"/>
<path d="M20 98L36 90L48 100L32 120H12Z" fill="#f29a1c"/>
<path d="M34 100L48 104L78 120H40Z" fill="#3c3a40"/>
<path d="M70 90L110 86L120 98V120H104L100 104L76 98Z" fill="#f29a1c"/>
<path d="M84 98L104 104L106 120H96Z" fill="#4a3a30"/>
<path d="M60 108L92 106L98 120H58Z" fill="#bbb4c2"/>
<path d="M66 110L86 108L88 115L68 117Z" fill="#f0a21c"/>
<path d="M28 74L42 70L46 84L34 92Z" fill="#8a8590"/>
<path d="M76 78C82 84 92 88 100 86L96 96L80 96Z" fill="#5e4c50"/>
</g>
<ellipse cx="53" cy="57" rx="4.800" ry="2.800" fill="#e8901a" transform="rotate(12 53 57)"/><path d="M45 53.500Q53 50 61 56" stroke="#3a2a20" stroke-width="1.300" fill="none"/>
<ellipse cx="80" cy="63.500" rx="4.400" ry="2.800" fill="#e8901a" transform="rotate(12 80 63.500)"/><path d="M73 59Q81 56.500 88 63" stroke="#3a2a20" stroke-width="1.300" fill="none"/>
<path d="M60 74Q67 78 74 77Q69 84 62 79Z" fill="#c24a3c"/><path d="M62 75.500Q67 78 72 77.500" stroke="#fff" stroke-width="1" fill="none"/>
<path d="M33 33Q38 22 48 25Q52 36 43 44Q33 44 33 33Z" fill="#f3a41a"/><path d="M36 30Q40 26 46 28" stroke="#fbd46a" stroke-width="1.500" fill="none"/><circle cx="42" cy="46.500" r="1.600" fill="#f3a41a"/>
</svg></div>
<div class="nm" style="left:1549px;top:745px;width:206.500px"><svg class="mm" width="22" height="22" viewBox="0 0 22 22"><path d="M11.200 1.800a4.300 4.300 0 0 1 4.300 4.300v7.400a4.300 4.300 0 0 1-3.300 4.200v1.600h2.800v1.700H7.400v-1.700h2.800v-1.600a4.300 4.300 0 0 1-3.300-4.200V6.100A4.300 4.300 0 0 1 11.200 1.800Z" fill="#f25b5b"/><path d="M1.500 21L21.500 .500" stroke="#2a2c2d" stroke-width="4.200"/><path d="M1.200 20.600L20.800 1" stroke="#f25b5b" stroke-width="1.600"/></svg><span style="letter-spacing:.38px">Олександр Чехарін</span></div>
<!-- avatar 4 -->
<div class="av" style="top:811.500px;background:#0e0e0e"></div>
<div class="nm" style="left:1549px;top:934px;width:207px"><svg class="mm" width="22" height="22" viewBox="0 0 22 22"><path d="M11.200 1.800a4.300 4.300 0 0 1 4.300 4.300v7.400a4.300 4.300 0 0 1-3.300 4.200v1.600h2.800v1.700H7.400v-1.700h2.800v-1.600a4.300 4.300 0 0 1-3.300-4.200V6.100A4.300 4.300 0 0 1 11.200 1.800Z" fill="#f25b5b"/><path d="M1.500 21L21.500 .500" stroke="#2a2c2d" stroke-width="4.200"/><path d="M1.200 20.600L20.800 1" stroke="#f25b5b" stroke-width="1.600"/></svg><span style="letter-spacing:.51px">Данил Фурманенко</span></div>

<div id="zbar" class="abs"></div>
<!-- zoom toolbar icons -->
<svg class="abs" style="left:56px;top:1004px" width="44" height="46" viewBox="0 0 44 46"><g fill="none" stroke="#fff" stroke-width="2.200" stroke-linecap="round"><rect x="14.600" y="5.200" width="13.600" height="24" rx="6.800"/><path d="M10.500 22.500V23.500A10.900 10.900 0 0 0 32.300 23.500V21"/><path d="M21.400 34.600V40.300M15 40.300H27.600"/></g><path d="M8.600 40.500L38 10.600" stroke="#000" stroke-width="3.600" stroke-linecap="round"/><path d="M6 38.500L36 8" stroke="#ff1f5a" stroke-width="3.600" stroke-linecap="round"/></svg>
<svg class="abs" style="left:118px;top:1020px" width="14" height="12" viewBox="0 0 14 12"><path d="M2 9L7 4L12 9" fill="none" stroke="#fff" stroke-width="1.900"/></svg>
<svg class="abs" style="left:194px;top:1004px" width="46" height="46" viewBox="0 0 46 46"><g fill="none" stroke="#fff" stroke-width="2.200" stroke-linejoin="round"><rect x="4.200" y="14" width="23.200" height="19.500" rx="4"/><path d="M31 23.700L39.600 15V32.600Z"/></g><path d="M9 40.600L39.600 10" stroke="#000" stroke-width="3.600" stroke-linecap="round"/><path d="M6.500 38.500L37.500 7.500" stroke="#ff1f5a" stroke-width="3.600" stroke-linecap="round"/></svg>
<svg class="abs" style="left:265px;top:1020px" width="14" height="12" viewBox="0 0 14 12"><path d="M2 9L7 4L12 9" fill="none" stroke="#fff" stroke-width="1.900"/></svg>
<!-- participants -->
<svg class="abs" style="left:724px;top:1013px" width="32" height="30" viewBox="0 0 32 30"><g fill="none" stroke="#fff" stroke-width="2.100"><circle cx="8.600" cy="5.600" r="3.300"/><circle cx="19.600" cy="10.800" r="4.100"/><path d="M11 13.200H6.200A4.200 4.200 0 0 0 2 17.400V19.500C2 23.400 5 25.600 9.500 25.800"/><path d="M14.600 18.500H24.600A3.600 3.600 0 0 1 28.200 22.100C28.200 24.800 25 26.400 19.600 26.400S11 24.800 11 22.100A3.600 3.600 0 0 1 14.600 18.500Z"/></g></svg>
<div class="abs" style="left:764px;top:1014px;height:24px;line-height:24px;font-size:17.500px;color:#aab2c2;letter-spacing:-.4px">21</div>
<svg class="abs" style="left:812px;top:1021px" width="14" height="12" viewBox="0 0 14 12"><path d="M2 9L7 4L12 9" fill="none" stroke="#fff" stroke-width="1.900"/></svg>
<!-- chat -->
<svg class="abs" style="left:886px;top:1011px" width="36" height="34" viewBox="0 0 36 34"><path d="M7 3.800H29A4.200 4.200 0 0 1 33.200 8V19.500A4.200 4.200 0 0 1 29 23.700H16.500L9.200 30.600V23.700H7A4.200 4.200 0 0 1 2.800 19.500V8A4.200 4.200 0 0 1 7 3.800Z" fill="none" stroke="#fff" stroke-width="2.100" stroke-linejoin="round"/></svg>
<svg class="abs" style="left:947px;top:1021px" width="14" height="12" viewBox="0 0 14 12"><path d="M2 9L7 4L12 9" fill="none" stroke="#fff" stroke-width="1.900"/></svg>
<!-- heart -->
<svg class="abs" style="left:1027px;top:1008px" width="42" height="38" viewBox="0 0 42 38"><g transform="rotate(14 21 19)"><path d="M21 33.500L7.600 20.600A8.200 8.200 0 0 1 19.200 9L21 10.800L22.800 9A8.200 8.200 0 0 1 34.400 20.600Z" fill="none" stroke="#fff" stroke-width="2.100" stroke-linejoin="round"/></g></svg>
<svg class="abs" style="left:1100px;top:1021px" width="14" height="12" viewBox="0 0 14 12"><path d="M2 9L7 4L12 9" fill="none" stroke="#fff" stroke-width="1.900"/></svg>
<!-- share -->
<svg class="abs" style="left:1178px;top:1012px" width="40" height="30" viewBox="0 0 40 30"><rect x="2.800" y="2.600" width="34.400" height="24.800" rx="3.200" fill="none" stroke="#fff" stroke-width="2.100"/><path d="M20 21.500V9M14.200 14.400L20 8.600L25.800 14.400" fill="none" stroke="#fff" stroke-width="2.100"/></svg>
<!-- more -->
<svg class="abs" style="left:1334px;top:1008px" width="38" height="38" viewBox="0 0 38 38"><circle cx="19" cy="19" r="16.600" fill="none" stroke="#fff" stroke-width="2.100"/><g fill="#fff"><circle cx="10.800" cy="19" r="2"/><circle cx="19" cy="19" r="2"/><circle cx="27.200" cy="19" r="2"/></g></svg>
<!-- leave -->
<svg class="abs" style="left:1828px;top:1007px" width="40" height="40" viewBox="0 0 40 40"><path d="M15.800 3H35.600Q36.800 3 36.800 4.200V29.500L27 36.600V9.800L36.400 3.400" fill="none" stroke="#ff1f5a" stroke-width="2" stroke-linejoin="round"/><g fill="none" stroke="#fff" stroke-width="2" stroke-linejoin="round" stroke-linecap="round"><circle cx="14.800" cy="10.200" r="3.800"/><path d="M10.600 15.600C7.800 16.400 4.600 18.800 3.600 21.400C3.200 22.800 5 23.800 6 22.600L8.800 20.200L9.400 25.600L4.200 33.800C3.400 35.200 5.400 36.600 6.600 35.200L12.200 28.400L15.200 35.400C15.800 36.900 18.200 36.900 18.600 35.200L17.400 24.800L17.200 21.200L21.400 22.800C22.800 23.200 23.600 21.400 22.400 20.600L17.600 16.400C16 15 12.600 15 10.600 15.600Z"/></g></svg>
<div class="zl" style="left:77px">Звук</div>
<div class="zl" style="left:216.500px"><span style="letter-spacing:-.5px">Видео</span></div>
<div class="zl" style="left:738.500px">Участники</div>
<div class="zl" style="left:904.500px"><span style="letter-spacing:-.75px">Чат</span></div>
<div class="zl" style="left:1048.500px">Отреагировать</div>
<div class="zl" style="left:1198.500px"><span style="letter-spacing:-.34px">Поделиться</span></div>
<div class="zl" style="left:1353px"><span style="letter-spacing:.29px">Дополнительно</span></div>
<div class="zl" style="left:1847px"><span style="letter-spacing:-.4px">Выйти</span></div>

</div>
</body>
</html>
